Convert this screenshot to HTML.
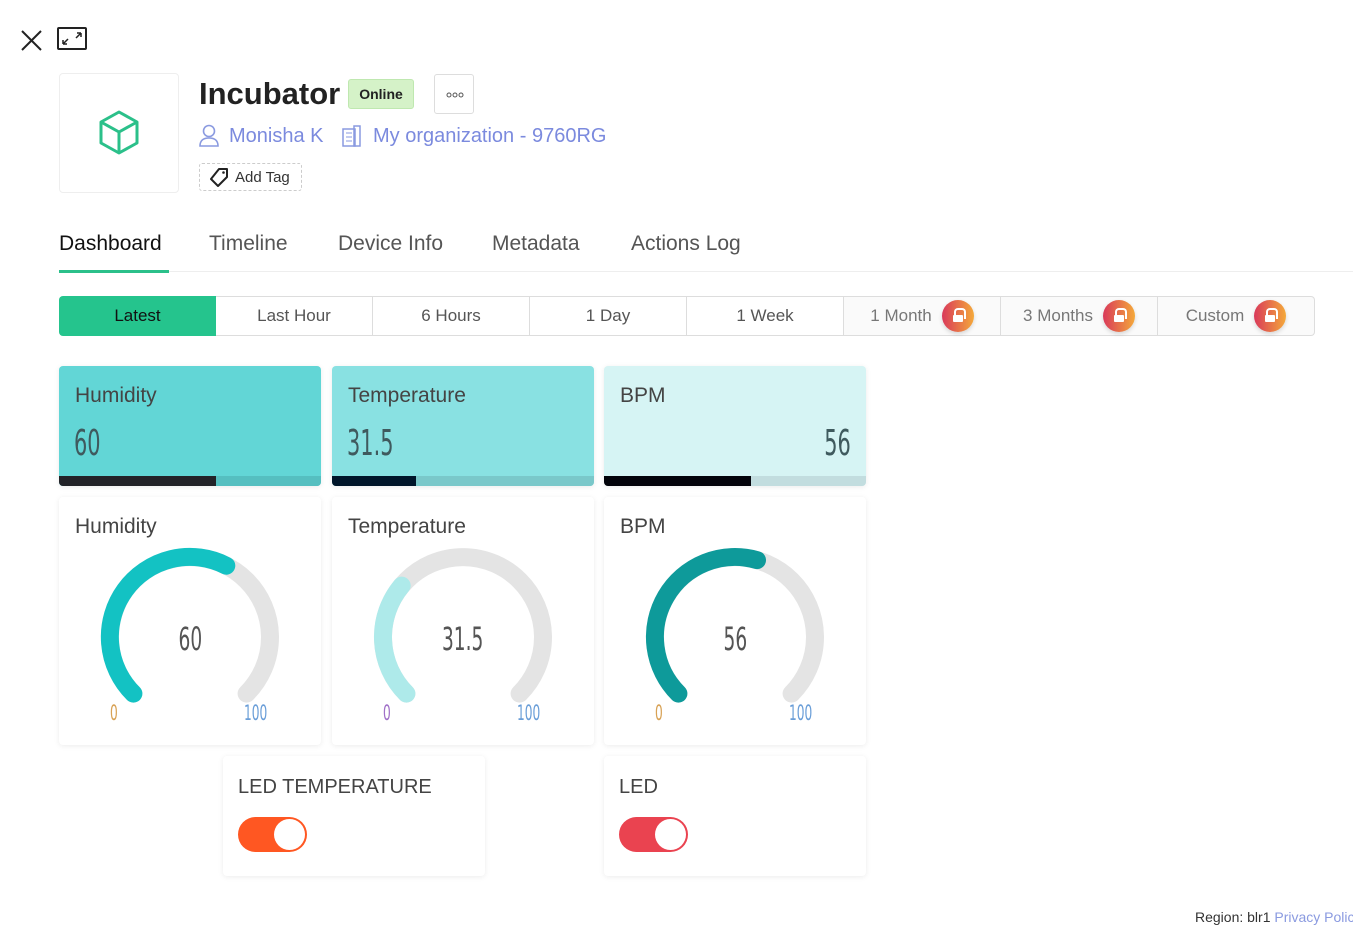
<!DOCTYPE html>
<html><head><meta charset="utf-8"><style>
*{box-sizing:border-box;margin:0;padding:0}
body{width:1353px;height:918px;background:#fff;font-family:"Liberation Sans",sans-serif;position:relative;overflow:hidden;color:#333}
.abs{position:absolute}
.nar{font-family:"DejaVu Sans","Liberation Sans",sans-serif;font-weight:normal}
.nar span{display:inline-block;transform:scaleX(.58)}
.card{position:absolute;width:262px;border-radius:4px;box-shadow:0 1px 6px rgba(0,0,0,.08);background:#fff;overflow:hidden}
.tb{position:absolute;top:296px;height:40px;border:1px solid #ddd;border-left:none;font-size:17px;color:#555;display:flex;align-items:center;justify-content:center;background:#fff}
.lock{display:inline-block;width:32px;height:32px;border-radius:50%;background:linear-gradient(90deg,#d9395a,#f4a93a);margin-left:10px;position:relative;box-shadow:0 2px 4px rgba(0,0,0,.15)}
.lock:after{content:"";position:absolute;left:11px;top:15px;width:10px;height:7px;background:#fff;border-radius:1px}
.lock:before{content:"";position:absolute;left:12px;top:8px;width:8px;height:9px;border:2px solid #fff;border-bottom:none;border-radius:4px 4px 0 0}
.tab{position:absolute;top:232px;font-size:21px;color:#555}
.lbl{position:absolute;left:16px;top:18px;font-size:21px;color:#444}
</style></head><body>
<svg class="abs" style="left:20px;top:29px" width="24" height="24"><path d="M2 2L21 21M21 2L2 21" stroke="#222" stroke-width="2"/></svg>
<svg class="abs" style="left:57px;top:27px" width="31" height="24"><rect x="1" y="1" width="28" height="21" rx="1" fill="none" stroke="#222" stroke-width="2"/><path d="M6 17L11 12M6 17V13M6 17H10M24 6L19 11M24 6V10M24 6H20" stroke="#222" stroke-width="1.5" fill="none"/></svg>
<div class="abs" style="left:59px;top:73px;width:120px;height:120px;border:1px solid #eee;border-radius:4px"></div>
<svg class="abs" style="left:96px;top:110px" width="46" height="46"><path d="M23 2L41 12V33L23 43L5 33V12Z M5 12L23 22L41 12 M23 22V43" fill="none" stroke="#2bc08a" stroke-width="3" stroke-linejoin="round"/></svg>
<div class="abs" style="left:199px;top:76px;font-size:31px;font-weight:bold;color:#222">Incubator</div>
<div class="abs" style="left:348px;top:79px;width:66px;height:30px;background:#d5f2c8;border:1px solid #bfe8b0;border-radius:3px;font-size:14px;font-weight:bold;color:#222;display:flex;align-items:center;justify-content:center">Online</div>
<div class="abs" style="left:434px;top:74px;width:40px;height:40px;border:1px solid #ddd;border-radius:3px"><svg class="abs" style="left:11px;top:17px" width="18" height="6"><circle cx="3" cy="3" r="2" fill="none" stroke="#555"/><circle cx="9" cy="3" r="2" fill="none" stroke="#555"/><circle cx="15" cy="3" r="2" fill="none" stroke="#555"/></svg></div>
<svg class="abs" style="left:198px;top:124px" width="22" height="24"><circle cx="11" cy="7" r="5.5" fill="none" stroke="#8a9ae0" stroke-width="1.6"/><path d="M2 22C2 16 6 14 11 14S20 16 20 22Z" fill="none" stroke="#8a9ae0" stroke-width="1.6"/></svg>
<div class="abs" style="left:229px;top:125px;font-size:20px;color:#7b8ade">Monisha K</div>
<svg class="abs" style="left:342px;top:125px" width="20" height="22"><rect x="1" y="4" width="12" height="17" fill="none" stroke="#8a9ae0" stroke-width="1.5"/><rect x="12" y="1" width="6" height="20" fill="none" stroke="#8a9ae0" stroke-width="1.5"/><path d="M4 8h6M4 12h6M4 16h6" stroke="#8a9ae0"/></svg>
<div class="abs" style="left:373px;top:125px;font-size:20px;color:#7b8ade">My organization - 9760RG</div>
<div class="abs" style="left:199px;top:163px;width:103px;height:28px;border:1px dashed #ccc;border-radius:3px"></div>
<svg class="abs" style="left:209px;top:167px" width="22" height="20"><path d="M10 2H18V10L9 19L2 12Z" fill="none" stroke="#222" stroke-width="2" stroke-linejoin="round"/><circle cx="14.5" cy="5.5" r="1.3" fill="#222"/></svg>
<div class="abs" style="left:235px;top:169px;font-size:15px;color:#333">Add Tag</div>

<div class="tab" style="left:59px;color:#111">Dashboard</div>
<div class="tab" style="left:209px">Timeline</div>
<div class="tab" style="left:338px">Device Info</div>
<div class="tab" style="left:492px">Metadata</div>
<div class="tab" style="left:631px">Actions Log</div>
<div class="abs" style="left:59px;top:271px;width:1294px;height:1px;background:#eee"></div>
<div class="abs" style="left:59px;top:270px;width:110px;height:3px;background:#2bc08a"></div>

<div class="tb" style="left:59px;width:157px;background:#25c48d;border:none;border-radius:4px 0 0 4px;color:#111">Latest</div>
<div class="tb" style="left:216px;width:157px;border-left:none">Last Hour</div>
<div class="tb" style="left:373px;width:157px">6 Hours</div>
<div class="tb" style="left:530px;width:157px">1 Day</div>
<div class="tb" style="left:687px;width:157px">1 Week</div>
<div class="tb" style="left:844px;width:157px;background:#fafafa;color:#777">1 Month<span class="lock"></span></div>
<div class="tb" style="left:1001px;width:157px;background:#fafafa;color:#777">3 Months<span class="lock"></span></div>
<div class="tb" style="left:1158px;width:157px;background:#fafafa;color:#777;border-radius:0 4px 4px 0">Custom<span class="lock"></span></div>

<div class="card" style="left:59px;top:366px;height:120px;background:#62d6d6"><div class="lbl">Humidity</div><div class="abs nar" style="left:15px;top:57px;font-size:36px;color:#3f5a5e"><span style="transform-origin:left">60</span></div><div class="abs" style="left:0;bottom:0;width:100%;height:10px;background:#55bfc0"><div style="width:60%;height:100%;background:#222328"></div></div></div>
<div class="card" style="left:332px;top:366px;height:120px;background:#89e1e2"><div class="lbl">Temperature</div><div class="abs nar" style="left:15px;top:57px;font-size:36px;color:#3f5a5e"><span style="transform-origin:left">31.5</span></div><div class="abs" style="left:0;bottom:0;width:100%;height:10px;background:#7ac8ca"><div style="width:32%;height:100%;background:#00162a"></div></div></div>
<div class="card" style="left:604px;top:366px;height:120px;background:#d6f4f4"><div class="lbl">BPM</div><div class="abs nar" style="right:15px;top:57px;font-size:36px;color:#3f5a5e"><span style="transform-origin:right">56</span></div><div class="abs" style="left:0;bottom:0;width:100%;height:10px;background:#c2dddf"><div style="width:56%;height:100%;background:#02030a"></div></div></div>

<div class="card" style="left:59px;top:497px;height:248px"><div class="lbl">Humidity</div>
<svg class="abs" style="left:0;top:0" width="262" height="248"><path d="M74.4 196.6A80 80 0 1 1 187.6 196.6" fill="none" stroke="#e4e4e4" stroke-width="18" stroke-linecap="round"/><path d="M74.4 196.6A80 80 0 0 1 167.3 68.7" fill="none" stroke="#13c2c3" stroke-width="18" stroke-linecap="round"/></svg>
<div class="abs nar" style="left:0;width:262px;text-align:center;top:123px;font-size:32px;color:#555"><span>60</span></div>
<div class="abs nar" style="left:51px;top:204px;font-size:21px;color:#d8a255"><span style="transform-origin:left">0</span></div><div class="abs nar" style="left:185px;top:204px;font-size:21px;color:#6a9ed8"><span style="transform-origin:left">100</span></div></div>

<div class="card" style="left:332px;top:497px;height:248px"><div class="lbl">Temperature</div>
<svg class="abs" style="left:0;top:0" width="262" height="248"><path d="M74.4 196.6A80 80 0 1 1 187.6 196.6" fill="none" stroke="#e4e4e4" stroke-width="18" stroke-linecap="round"/><path d="M74.4 196.6A80 80 0 0 1 69.7 88.6" fill="none" stroke="#aeeaea" stroke-width="18" stroke-linecap="round"/></svg>
<div class="abs nar" style="left:0;width:262px;text-align:center;top:123px;font-size:32px;color:#555"><span>31.5</span></div>
<div class="abs nar" style="left:51px;top:204px;font-size:21px;color:#a070c8"><span style="transform-origin:left">0</span></div><div class="abs nar" style="left:185px;top:204px;font-size:21px;color:#6a9ed8"><span style="transform-origin:left">100</span></div></div>

<div class="card" style="left:604px;top:497px;height:248px"><div class="lbl">BPM</div>
<svg class="abs" style="left:0;top:0" width="262" height="248"><path d="M74.4 196.6A80 80 0 1 1 187.6 196.6" fill="none" stroke="#e4e4e4" stroke-width="18" stroke-linecap="round"/><path d="M74.4 196.6A80 80 0 0 1 153 63.1" fill="none" stroke="#0e9a9a" stroke-width="18" stroke-linecap="round"/></svg>
<div class="abs nar" style="left:0;width:262px;text-align:center;top:123px;font-size:32px;color:#555"><span>56</span></div>
<div class="abs nar" style="left:51px;top:204px;font-size:21px;color:#d8a255"><span style="transform-origin:left">0</span></div><div class="abs nar" style="left:185px;top:204px;font-size:21px;color:#6a9ed8"><span style="transform-origin:left">100</span></div></div>

<div class="card" style="left:223px;top:756px;height:120px"><div class="lbl" style="left:15px;top:20px;font-size:20px">LED TEMPERATURE</div>
<div class="abs" style="left:15px;top:61px;width:69px;height:35px;border-radius:18px;background:#ff5722"><div class="abs" style="right:2px;top:2px;width:31px;height:31px;border-radius:50%;background:#fff"></div></div></div>
<div class="card" style="left:604px;top:756px;height:120px"><div class="lbl" style="left:15px;top:20px;font-size:20px">LED</div>
<div class="abs" style="left:15px;top:61px;width:69px;height:35px;border-radius:18px;background:#ea4350"><div class="abs" style="right:2px;top:2px;width:31px;height:31px;border-radius:50%;background:#fff"></div></div></div>

<div class="abs" style="left:1195px;top:909px;font-size:14px;color:#333;white-space:nowrap">Region: blr1 <span style="color:#8a9ae0">Privacy Policy</span></div>
</body></html>
